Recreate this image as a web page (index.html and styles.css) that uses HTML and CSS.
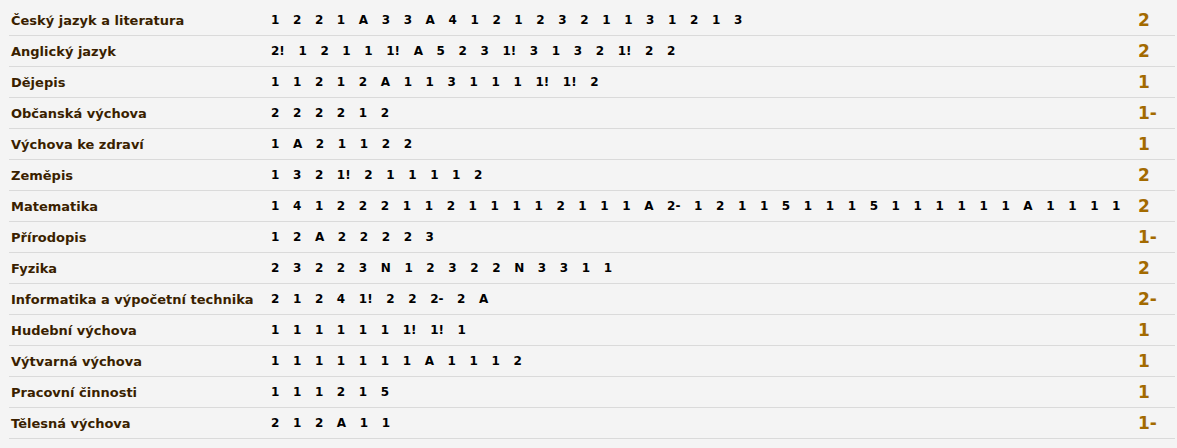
FILE: index.html
```html
<!DOCTYPE html>
<html lang="cs">
<head>
<meta charset="utf-8">
<title>Známky</title>
<link rel="stylesheet" href="styles.css">
</head>
<body>
<div class="grades">
  <div class="row"><div class="subject">Český jazyk a literatura</div><div class="marks"><span>1</span><span>2</span><span>2</span><span>1</span><span>A</span><span>3</span><span>3</span><span>A</span><span>4</span><span>1</span><span>2</span><span>1</span><span>2</span><span>3</span><span>2</span><span>1</span><span>1</span><span>3</span><span>1</span><span>2</span><span>1</span><span>3</span></div><div class="final">2</div></div>
  <div class="row"><div class="subject">Anglický jazyk</div><div class="marks"><span>2!</span><span>1</span><span>2</span><span>1</span><span>1</span><span>1!</span><span>A</span><span>5</span><span>2</span><span>3</span><span>1!</span><span>3</span><span>1</span><span>3</span><span>2</span><span>1!</span><span>2</span><span>2</span></div><div class="final">2</div></div>
  <div class="row"><div class="subject">Dějepis</div><div class="marks"><span>1</span><span>1</span><span>2</span><span>1</span><span>2</span><span>A</span><span>1</span><span>1</span><span>3</span><span>1</span><span>1</span><span>1</span><span>1!</span><span>1!</span><span>2</span></div><div class="final">1</div></div>
  <div class="row"><div class="subject">Občanská výchova</div><div class="marks"><span>2</span><span>2</span><span>2</span><span>2</span><span>1</span><span>2</span></div><div class="final">1-</div></div>
  <div class="row"><div class="subject">Výchova ke zdraví</div><div class="marks"><span>1</span><span>A</span><span>2</span><span>1</span><span>1</span><span>2</span><span>2</span></div><div class="final">1</div></div>
  <div class="row"><div class="subject">Zeměpis</div><div class="marks"><span>1</span><span>3</span><span>2</span><span>1!</span><span>2</span><span>1</span><span>1</span><span>1</span><span>1</span><span>2</span></div><div class="final">2</div></div>
  <div class="row"><div class="subject">Matematika</div><div class="marks"><span>1</span><span>4</span><span>1</span><span>2</span><span>2</span><span>2</span><span>1</span><span>1</span><span>2</span><span>1</span><span>1</span><span>1</span><span>1</span><span>2</span><span>1</span><span>1</span><span>1</span><span>A</span><span>2-</span><span>1</span><span>2</span><span>1</span><span>1</span><span>5</span><span>1</span><span>1</span><span>1</span><span>5</span><span>1</span><span>1</span><span>1</span><span>1</span><span>1</span><span>1</span><span>A</span><span>1</span><span>1</span><span>1</span><span>1</span></div><div class="final">2</div></div>
  <div class="row"><div class="subject">Přírodopis</div><div class="marks"><span>1</span><span>2</span><span>A</span><span>2</span><span>2</span><span>2</span><span>2</span><span>3</span></div><div class="final">1-</div></div>
  <div class="row"><div class="subject">Fyzika</div><div class="marks"><span>2</span><span>3</span><span>2</span><span>2</span><span>3</span><span>N</span><span>1</span><span>2</span><span>3</span><span>2</span><span>2</span><span>N</span><span>3</span><span>3</span><span>1</span><span>1</span></div><div class="final">2</div></div>
  <div class="row"><div class="subject">Informatika a výpočetní technika</div><div class="marks"><span>2</span><span>1</span><span>2</span><span>4</span><span>1!</span><span>2</span><span>2</span><span>2-</span><span>2</span><span>A</span></div><div class="final">2-</div></div>
  <div class="row"><div class="subject">Hudební výchova</div><div class="marks"><span>1</span><span>1</span><span>1</span><span>1</span><span>1</span><span>1</span><span>1!</span><span>1!</span><span>1</span></div><div class="final">1</div></div>
  <div class="row"><div class="subject">Výtvarná výchova</div><div class="marks"><span>1</span><span>1</span><span>1</span><span>1</span><span>1</span><span>1</span><span>1</span><span>A</span><span>1</span><span>1</span><span>1</span><span>2</span></div><div class="final">1</div></div>
  <div class="row"><div class="subject">Pracovní činnosti</div><div class="marks"><span>1</span><span>1</span><span>1</span><span>2</span><span>1</span><span>5</span></div><div class="final">1</div></div>
  <div class="row"><div class="subject">Tělesná výchova</div><div class="marks"><span>2</span><span>1</span><span>2</span><span>A</span><span>1</span><span>1</span></div><div class="final">1-</div></div>
</div>
</body>
</html>
```

FILE: styles.css
```css
html, body {
  margin: 0;
  padding: 0;
  background: #f4f4f4;
}

body {
  padding: 5px 2px 0 9px;
  font-family: "DejaVu Sans", Verdana, sans-serif;
}

.grades {
  display: flex;
  flex-direction: column;
}

.row {
  display: flex;
  align-items: center;
  height: 30px;
  border-bottom: 1px solid #dadada;
}

.subject {
  width: 260px;
  padding-left: 2px;
  flex: none;
  font-size: 13px;
  font-weight: bold;
  color: #3a1f00;
  white-space: nowrap;
}

.marks {
  flex: 1;
  display: flex;
  gap: 13.6px;
  font-size: 12px;
  font-weight: bold;
  color: #000;
  white-space: nowrap;
}

.final {
  width: 37px;
  flex: none;
  font-size: 17px;
  font-weight: bold;
  color: #a36a00;
}
```
